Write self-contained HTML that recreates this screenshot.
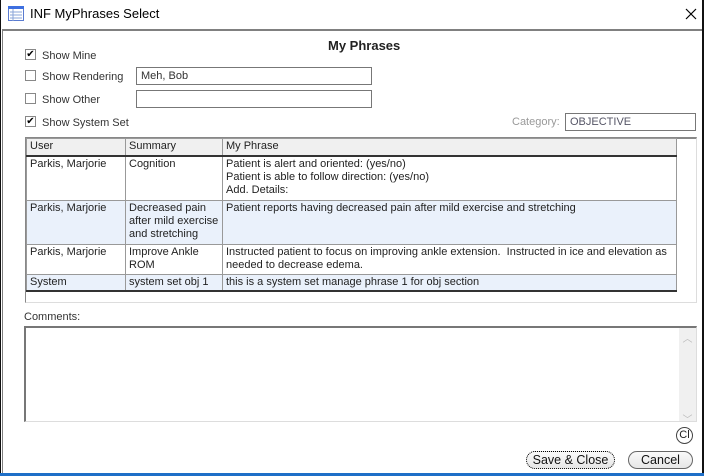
<!DOCTYPE html>
<html><head><meta charset="utf-8"><style>
*{box-sizing:border-box;margin:0;padding:0}
body{width:704px;height:476px;background:#fff;font-family:"Liberation Sans",Arial,sans-serif;font-size:11px;color:#222;position:relative;overflow:hidden}
.abs{position:absolute}
.win{left:0;top:0;width:704px;height:476px;border-left:1px solid #111;border-right:2px solid #111}
.title{left:30px;top:6px;font-size:13px;color:#000}
.content{left:2px;top:29px;width:700px;height:445px;border-top:2px solid #808080;border-left:1px solid #808080}
.bot{left:0;top:473px;width:704px;height:3px;background:#1e6fc8}
.cb{width:11px;height:11px;border:1px solid #888;background:#fff;font-size:10px;line-height:9px;text-align:center;color:#000}
.lbl{color:#333}
.tb{border:1px solid #777;background:#fff;padding-left:4px;line-height:17px;color:#333}
table{border-collapse:collapse;font-size:11px}
td,th{border:1px solid #999;vertical-align:top;padding:1px 3px;line-height:13px;font-weight:normal;text-align:left}
th{background:#f0f0f0;border-bottom:2px solid #333;height:17px}
tr.alt td{background:#eaf1fb}
.btn{border:1px solid #666;border-radius:9px;background:linear-gradient(#fafafa,#e6e6e6);font-size:12.5px;text-align:center;line-height:16px;color:#111}
</style></head><body>
<div class="abs win"></div>
<svg class="abs" style="left:8px;top:6px" width="16" height="15"><rect x="0.5" y="0.5" width="15" height="14" fill="#fff" stroke="#5a7bd0"/><rect x="0" y="0" width="16" height="3" fill="#3d6fe0"/><g stroke="#8aa4d8"><line x1="5" y1="3" x2="5" y2="15"/><line x1="2" y1="6" x2="14" y2="6"/><line x1="2" y1="9" x2="14" y2="9"/><line x1="2" y1="12" x2="14" y2="12"/></g></svg>
<div class="abs title">INF MyPhrases Select</div>
<svg class="abs" style="left:685px;top:8px" width="12" height="12"><path d="M1 1L11 11M11 1L1 11" stroke="#000" stroke-width="1.2"/></svg>
<div class="abs content"></div>
<div class="abs" style="left:328px;top:38px;font-size:13px;font-weight:bold;color:#222">My Phrases</div>

<div class="abs cb" style="left:25px;top:49px">✔</div><div class="abs lbl" style="left:42px;top:50px">Show Mine</div>
<div class="abs cb" style="left:25px;top:70px"></div><div class="abs lbl" style="left:42px;top:71px">Show Rendering</div>
<div class="abs tb" style="left:136px;top:67px;width:236px;height:18px">Meh, Bob</div>
<div class="abs cb" style="left:25px;top:93px"></div><div class="abs lbl" style="left:42px;top:94px">Show Other</div>
<div class="abs tb" style="left:136px;top:90px;width:236px;height:18px"></div>
<div class="abs cb" style="left:25px;top:116px">✔</div><div class="abs lbl" style="left:42px;top:117px">Show System Set</div>
<div class="abs" style="left:512px;top:116px;color:#999">Category:</div>
<div class="abs tb" style="left:565px;top:113px;width:131px;height:18px;color:#556">OBJECTIVE</div>

<div class="abs" style="left:25px;top:137px;width:672px;height:166px;border:1px solid #ddd;border-top:2px solid #888;border-left:1px solid #888"></div>
<table class="abs" style="left:26px;top:138px;width:651px">
<tr><th style="width:99px">User</th><th style="width:97px">Summary</th><th>My Phrase</th></tr>
<tr style="height:45px"><td>Parkis, Marjorie</td><td>Cognition</td><td>Patient is alert and oriented: (yes/no)<br>Patient is able to follow direction: (yes/no)<br>Add. Details:</td></tr>
<tr class="alt" style="height:44px"><td>Parkis, Marjorie</td><td>Decreased pain after mild exercise and stretching</td><td>Patient reports having decreased pain after mild exercise and stretching</td></tr>
<tr style="height:30px"><td>Parkis, Marjorie</td><td>Improve Ankle ROM</td><td>Instructed patient to focus on improving ankle extension.&nbsp; Instructed in ice and elevation as needed to decrease edema.</td></tr>
<tr class="alt" style="height:15px"><td style="border-bottom:2px solid #333">System</td><td style="border-bottom:2px solid #333">system set obj 1</td><td style="border-bottom:2px solid #333">this is a system set manage phrase 1 for obj section</td></tr>
</table>

<div class="abs lbl" style="left:24px;top:311px">Comments:</div>
<div class="abs" style="left:24px;top:326px;width:673px;height:96px;border:1px solid #ddd;border-top:2px solid #777;border-left:2px solid #777"></div>
<div class="abs" style="left:679px;top:328px;width:17px;height:93px;background:#f0f0f0;color:#bbb;font-size:10px;text-align:center"><div style="margin-top:2px">︿</div><div style="margin-top:66px">﹀</div></div>
<div class="abs" style="left:676px;top:427px;width:17px;height:17px;border:1px solid #444;border-radius:50%;font-size:11px;text-align:center;line-height:15px">Cl</div>
<div class="abs btn" style="left:526px;top:451px;width:89px;height:18px;border:1px dotted #000">Save &amp; Close</div>
<div class="abs btn" style="left:628px;top:451px;width:65px;height:18px">Cancel</div>
<div class="abs bot"></div>
</body></html>
